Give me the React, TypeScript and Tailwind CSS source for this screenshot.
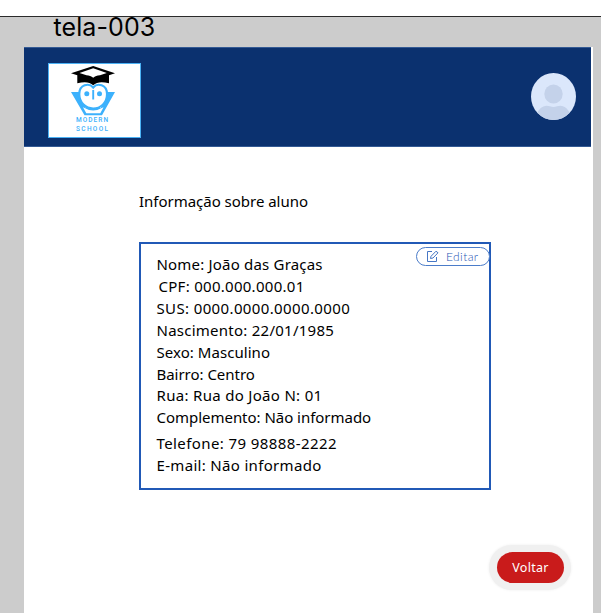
const rows = [
  { text: "Nome: João das Graças", cls: "tracking-[0.19px]" },
  { text: "CPF: 000.000.000.01", cls: "pl-[2px] tracking-[0.28px]" },
  { text: "SUS: 0000.0000.0000.0000", cls: "tracking-[0.37px]" },
  { text: "Nascimento: 22/01/1985", cls: "tracking-[0.25px]" },
  { text: "Sexo: Masculino", cls: "tracking-[0.05px]" },
  { text: "Bairro: Centro", cls: "tracking-[-0.03px]" },
  { text: "Rua: Rua do João N: 01", cls: "tracking-[0.31px]" },
  { text: "Complemento: Não informado", cls: "tracking-[-0.03px]" },
  { text: "Telefone: 79 98888-2222", cls: "mt-[4px] tracking-[0.41px]" },
  { text: "E-mail: Não informado", cls: "tracking-[0.32px]" },
];

function Logo() {
  return (
    <div className="flex h-[75px] w-[93px] flex-col items-start border border-[#4bb2f5] bg-white">
      <svg viewBox="0 0 46 52" className="mt-px ml-[21px] h-[52px] w-[46px] shrink-0" fill="none">
        <path d="M1 8.300 23.200 1 45 8.300 39 10.200V18.300C32 16.600 27 16.800 23.200 20.300 19.500 16.800 14.500 16.600 7.300 18.300V10.200Z" fill="#000" />
        <path d="M9.500 8 23.200 3.200 36.800 8 30 10.200C27 10.300 25 11 23.200 12.800 21.500 11 19 10.300 16.500 10.200Z" fill="#fff" />
        <path d="M1 27H10V34L16 43H30.500L36.500 34V27H45L32 50.300H14.500Z" fill="#3cb1fc" />
        <path d="M13 42.300Q23 48.500 33.500 42.300L30.300 48.200H16.300Z" fill="#fff" />
        <path d="M23.200 22.500C19 17.500 9.300 19.500 9.300 29 9.300 38 16 43.500 23.200 43.500S37 38 37 29C37 19.500 27.300 17.500 23.200 22.500Z" fill="#fff" stroke="#3cb1fc" strokeWidth="2.100" />
        <path d="M23.200 25V34.500" stroke="#3cb1fc" strokeWidth="1.900" />
        <circle cx="16.800" cy="28.800" r="2.500" fill="#3cb1fc" />
        <circle cx="29.500" cy="28.800" r="2.500" fill="#3cb1fc" />
      </svg>
      <div className="-mt-px ml-[27px] font-['Roboto',sans-serif] text-[6.500px] leading-[9px] font-medium text-[#3cb1fc]">
        <div className="tracking-[1.05px]">MODERN</div>
        <div className="tracking-[1.35px]">SCHOOL</div>
      </div>
    </div>
  );
}

function Avatar() {
  return (
    <svg viewBox="0 0 45 47" className="h-[47px] w-[45px]">
      <defs>
        <clipPath id="avatar-shape"><ellipse cx="22.500" cy="23.500" rx="22.500" ry="23.500" /></clipPath>
      </defs>
      <g clipPath="url(#avatar-shape)">
        <rect width="45" height="47" fill="#dbe7fb" />
        <path d="M5 42C8 35 13 31 19 33.300Q22.500 34.500 26 33.300C32 31 37 35 40 42V47H5Z" fill="#c4d2ea" />
        <ellipse cx="22.500" cy="21" rx="9.200" ry="9.500" fill="#c4d2ea" />
      </g>
    </svg>
  );
}

export default function App() {
  return (
    <div className="flex h-[613px] w-[601px] flex-col overflow-hidden bg-[#ccc] font-['Noto_Sans',sans-serif] text-black">
      <div className="h-[17px] shrink-0 border-b border-[#2b2b2b] bg-white" />
      <div className="h-[30px] shrink-0 pl-[53.5px] font-['Inter',sans-serif] text-[25px] leading-[20px] tracking-[0.1px]">tela-003</div>
      <main className="ml-[24px] flex w-[569px] flex-1 flex-col bg-white">
        <header className="mr-[2px] flex h-[100px] shrink-0 items-start justify-between border-y border-[#345a94] bg-[#0b316f] pt-[15px] pr-[15px] pl-[24px]">
          <Logo />
          <div className="pt-[10px]"><Avatar /></div>
        </header>
        <h1 className="mt-[42px] ml-[115px] h-[24px] text-[15px] leading-[24px] tracking-[-0.02px] whitespace-nowrap"><span>Informação sobre aluno</span></h1>
        <section className="relative mt-[29px] ml-[115px] h-[248px] w-[352px] shrink-0 border-2 border-[#2159b6] pt-[10px] pl-[15.5px] text-[15px] leading-[21.900px] whitespace-nowrap">
          {rows.map((r) => <div key={r.text} className={r.cls}><span>{r.text}</span></div>)}
          <button className="absolute top-[3px] right-[-1px] flex h-[19px] w-[74px] items-center rounded-full border border-[#4b7cc9] bg-white pl-[9px] text-[#4777c5]">
            <svg viewBox="0 0 13 13" className="h-[13px] w-[13px]" fill="none" stroke="currentColor" strokeWidth="1">
              <path d="M6 1.500H1.500V11.500H10.500V7M4.500 8.500 5 6.300 10 1.200 12 2.800 7 8Z" />
            </svg>
            <span className="ml-[7px] font-['Lato',sans-serif] text-[12px] leading-[16px] font-light tracking-[0.4px] text-[#1f57b5]">Editar</span>
          </button>
        </section>
        <button className="mt-[55px] ml-[465px] flex h-[45px] w-[82px] shrink-0 items-center justify-center rounded-full bg-[#f0f0f0] shadow-[0_0_3px_#eeeeee]">
          <span className="flex h-[31px] w-[67px] items-center justify-center rounded-full bg-[#c91b1b] pt-px pl-px text-[12.500px] tracking-[0.3px] text-white">Voltar</span>
        </button>
      </main>
    </div>
  );
}
